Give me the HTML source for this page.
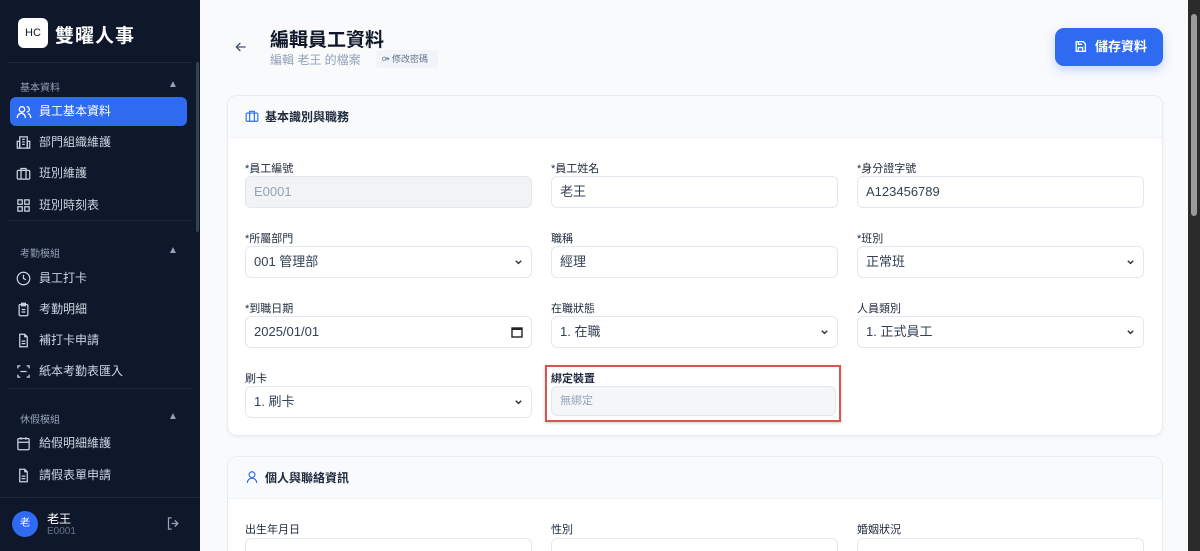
<!DOCTYPE html>
<html style="height:551px;overflow:hidden"><head><meta charset="utf-8"><style>
*{box-sizing:border-box;margin:0;padding:0}
body{width:1200px;height:551px;overflow:hidden;position:relative;background:#f8fafc;font-family:"Liberation Sans","Noto Sans CJK TC",sans-serif;color:#1e293b}
.a{position:absolute}
.sb{left:0;top:0;width:200px;height:551px;background:#0f172a}
.sec{left:20px;font-size:10px;color:#94a3b8}
.tri{left:168px;font-size:10px;color:#94a3b8}
.it{left:10px;width:177px;height:29px;border-radius:6px;color:#cbd5e1;font-size:12px;line-height:29px;padding-left:29px}
.it svg{position:absolute;left:6px;top:7px}
.hr{left:8px;width:184px;height:1px;background:#1e293b}
.lbl{font-size:11px;color:#1e293b}
.inp{height:32px;width:287px;border:1px solid #e2e8f0;border-radius:6px;background:#fff;font-size:13px;line-height:30px;padding-left:8px;color:#334155}
.chev{position:absolute;right:8px;top:11px}
</style></head><body>
<div class="a sb"></div>
<div class="a" style="left:196px;top:62px;width:3px;height:170px;background:#334155;border-radius:2px"></div>
<div class="a" style="left:18px;top:18px;width:30px;height:30px;background:#fff;border-radius:6px;font-size:11px;line-height:30px;text-align:center;color:#0f172a">HC</div>
<div class="a" style="left:55px;top:21px;font-size:19px;font-weight:bold;color:#fff;letter-spacing:1px">雙曜人事</div>
<div class="a hr" style="top:62px"></div>
<div class="a sec" style="top:79px">基本資料</div><div class="a tri" style="top:79px">▲</div>
<div class="a it" style="top:97px;background:#2f6bf0;color:#fff">員工基本資料<svg width="16" height="16" viewBox="0 0 24 24" fill="none" stroke="#fff" stroke-width="2"><circle cx="9" cy="8" r="4"/><path d="M2 21v-1a6 6 0 0 1 12 0v1M16 4a4 4 0 0 1 0 8M22 21v-1a6 6 0 0 0-4-5.6"/></svg></div>
<div class="a it" style="top:128px">部門組織維護<svg width="15" height="15" viewBox="0 0 24 24" fill="none" stroke="#cbd5e1" stroke-width="2"><rect x="6" y="3" width="12" height="18"/><path d="M2 10h4v11H2zM18 10h4v11h-4zM10 7h4M10 11h4M10 15h4"/></svg></div>
<div class="a it" style="top:159px">班別維護<svg width="15" height="15" viewBox="0 0 24 24" fill="none" stroke="#cbd5e1" stroke-width="2"><rect x="2" y="7" width="20" height="14" rx="2"/><path d="M8 7V4h8v3M8 7v14M16 7v14"/></svg></div>
<div class="a it" style="top:191px">班別時刻表<svg width="15" height="15" viewBox="0 0 24 24" fill="none" stroke="#cbd5e1" stroke-width="2"><rect x="3" y="3" width="7" height="7"/><rect x="14" y="3" width="7" height="7"/><rect x="3" y="14" width="7" height="7"/><rect x="14" y="14" width="7" height="7"/></svg></div>
<div class="a hr" style="top:220px"></div>
<div class="a sec" style="top:245px">考勤模組</div><div class="a tri" style="top:245px">▲</div>
<div class="a it" style="top:264px">員工打卡<svg width="15" height="15" viewBox="0 0 24 24" fill="none" stroke="#cbd5e1" stroke-width="2"><circle cx="12" cy="12" r="10"/><path d="M12 6v6l4 2"/></svg></div>
<div class="a it" style="top:295px">考勤明細<svg width="15" height="15" viewBox="0 0 24 24" fill="none" stroke="#cbd5e1" stroke-width="2"><rect x="5" y="4" width="14" height="18" rx="2"/><path d="M9 2h6v4H9zM9 12h6M9 16h6"/></svg></div>
<div class="a it" style="top:326px">補打卡申請<svg width="15" height="15" viewBox="0 0 24 24" fill="none" stroke="#cbd5e1" stroke-width="2"><path d="M14 2H6v20h12V6zM14 2v4h4M9 13h6M9 17h6"/></svg></div>
<div class="a it" style="top:357px">紙本考勤表匯入<svg width="15" height="15" viewBox="0 0 24 24" fill="none" stroke="#cbd5e1" stroke-width="2"><path d="M3 7V3h4M17 3h4v4M21 17v4h-4M7 21H3v-4M7 12h10"/></svg></div>
<div class="a hr" style="top:388px"></div>
<div class="a sec" style="top:411px">休假模組</div><div class="a tri" style="top:411px">▲</div>
<div class="a it" style="top:429px">給假明細維護<svg width="15" height="15" viewBox="0 0 24 24" fill="none" stroke="#cbd5e1" stroke-width="2"><rect x="3" y="4" width="18" height="18" rx="2"/><path d="M3 10h18M8 2v4M16 2v4"/></svg></div>
<div class="a it" style="top:461px">請假表單申請<svg width="15" height="15" viewBox="0 0 24 24" fill="none" stroke="#cbd5e1" stroke-width="2"><path d="M14 2H6v20h12V6zM14 2v4h4M9 13h6M9 17h6"/></svg></div>
<div class="a hr" style="top:497px;left:0;width:200px"></div>
<div class="a" style="left:12px;top:511px;width:26px;height:26px;border-radius:50%;background:#2f6bf0;color:#fff;font-size:10px;line-height:26px;text-align:center">老</div>
<div class="a" style="left:47px;top:510px;font-size:12px;color:#fff">老王</div>
<div class="a" style="left:47px;top:526px;font-size:10px;color:#64748b">E0001</div>
<svg class="a" style="left:166px;top:516px" width="15" height="15" viewBox="0 0 24 24" fill="none" stroke="#94a3b8" stroke-width="2"><path d="M9 3H4v18h5M14 7l5 5-5 5M19 12H9"/></svg>

<div class="a" style="left:1188px;top:0;width:12px;height:551px;background:#2b2b2b"></div>
<div class="a" style="left:1191px;top:14px;width:6px;height:202px;background:#9a9a9a;border-radius:3px"></div>

<svg class="a" style="left:233px;top:39px" width="16" height="16" viewBox="0 0 24 24" fill="none" stroke="#475569" stroke-width="2"><path d="M19 12H5M11 6l-6 6 6 6"/></svg>
<div class="a" style="left:270px;top:25px;font-size:19px;font-weight:bold;color:#0f172a">編輯員工資料</div>
<div class="a" style="left:270px;top:51px;font-size:12px;color:#94a3b8">編輯 老王 的檔案</div>
<div class="a" style="left:376px;top:50px;width:62px;height:18px;background:#f1f5f9;border-radius:3px;font-size:9px;color:#64748b;line-height:18px;padding-left:6px">⚩ 修改密碼</div>
<div class="a" style="left:1055px;top:28px;width:108px;height:38px;background:#2f6bf0;border-radius:9px;color:#fff;font-size:13px;font-weight:bold;line-height:38px;padding-left:40px;box-shadow:0 4px 10px rgba(47,107,240,.25)">儲存資料</div>
<svg class="a" style="left:1074px;top:40px" width="13" height="13" viewBox="0 0 24 24" fill="none" stroke="#fff" stroke-width="2.4"><path d="M4 3h13l4 4v14H4zM8 3v5h7M8 21v-7h8v7"/></svg>

<div class="a" style="left:227px;top:95px;width:936px;height:341px;background:#fff;border:1px solid #e8edf3;border-radius:10px;box-shadow:0 1px 3px rgba(0,0,0,.05);overflow:hidden">
<div style="height:42px;background:#f8fafc;border-bottom:1px solid #eef2f6"></div></div>
<svg class="a" style="left:245px;top:109px" width="14" height="14" viewBox="0 0 24 24" fill="none" stroke="#2f6bf0" stroke-width="2"><rect x="2" y="7" width="20" height="14" rx="2"/><path d="M8 7V4h8v3M8 7v14M16 7v14"/></svg>
<div class="a" style="left:265px;top:108px;font-size:12px;font-weight:bold">基本識別與職務</div>

<div class="a" style="left:227px;top:456px;width:936px;height:95px;background:#fff;border:1px solid #e8edf3;border-bottom:none;border-radius:10px 10px 0 0;overflow:hidden">
<div style="height:42px;background:#f8fafc;border-bottom:1px solid #eef2f6"></div></div>
<svg class="a" style="left:245px;top:470px" width="14" height="14" viewBox="0 0 24 24" fill="none" stroke="#2f6bf0" stroke-width="2"><circle cx="12" cy="8" r="5"/><path d="M4 22a8 8 0 0 1 16 0"/></svg>
<div class="a" style="left:265px;top:469px;font-size:12px;font-weight:bold">個人與聯絡資訊</div>

<div class="a lbl" style="left:245px;top:160px">*員工編號</div>
<div class="a inp" style="left:245px;top:176px;background:#f1f3f5;color:#94a3b8">E0001</div>
<div class="a lbl" style="left:551px;top:160px">*員工姓名</div>
<div class="a inp" style="left:551px;top:176px">老王</div>
<div class="a lbl" style="left:857px;top:160px">*身分證字號</div>
<div class="a inp" style="left:857px;top:176px">A123456789</div>

<div class="a lbl" style="left:245px;top:230px">*所屬部門</div>
<div class="a inp" style="left:245px;top:246px">001 管理部<svg class="chev" width="9" height="9" viewBox="0 0 10 10"><path d="M2 3l3 3 3-3" stroke="#333" stroke-width="1.6" fill="none"/></svg></div>
<div class="a lbl" style="left:551px;top:230px">職稱</div>
<div class="a inp" style="left:551px;top:246px">經理</div>
<div class="a lbl" style="left:857px;top:230px">*班別</div>
<div class="a inp" style="left:857px;top:246px">正常班<svg class="chev" width="9" height="9" viewBox="0 0 10 10"><path d="M2 3l3 3 3-3" stroke="#333" stroke-width="1.6" fill="none"/></svg></div>

<div class="a lbl" style="left:245px;top:300px">*到職日期</div>
<div class="a inp" style="left:245px;top:316px">2025/01/01<svg class="chev" style="top:9px" width="12" height="12" viewBox="0 0 12 12"><rect x="1" y="2" width="10" height="9" fill="none" stroke="#222" stroke-width="1.4"/><path d="M1 3h10" stroke="#222" stroke-width="2"/></svg></div>
<div class="a lbl" style="left:551px;top:300px">在職狀態</div>
<div class="a inp" style="left:551px;top:316px">1. 在職<svg class="chev" width="9" height="9" viewBox="0 0 10 10"><path d="M2 3l3 3 3-3" stroke="#333" stroke-width="1.6" fill="none"/></svg></div>
<div class="a lbl" style="left:857px;top:300px">人員類別</div>
<div class="a inp" style="left:857px;top:316px">1. 正式員工<svg class="chev" width="9" height="9" viewBox="0 0 10 10"><path d="M2 3l3 3 3-3" stroke="#333" stroke-width="1.6" fill="none"/></svg></div>

<div class="a lbl" style="left:245px;top:370px">刷卡</div>
<div class="a inp" style="left:245px;top:386px">1. 刷卡<svg class="chev" width="9" height="9" viewBox="0 0 10 10"><path d="M2 3l3 3 3-3" stroke="#333" stroke-width="1.6" fill="none"/></svg></div>
<div class="a" style="left:545px;top:365px;width:296px;height:57px;border:2px solid #d9534f;box-shadow:0 1px 3px rgba(0,0,0,.2)"></div>
<div class="a lbl" style="left:551px;top:370px;font-weight:bold">綁定裝置</div>
<div class="a inp" style="left:551px;top:386px;width:285px;height:30px;background:#f5f6f8;color:#94a3b8;font-size:11px;line-height:28px">無綁定</div>

<div class="a lbl" style="left:245px;top:521px">出生年月日</div>
<div class="a inp" style="left:245px;top:538px;height:13px;border-bottom:none;border-radius:6px 6px 0 0;color:#64748b"></div>
<div class="a lbl" style="left:551px;top:521px">性別</div>
<div class="a inp" style="left:551px;top:538px;height:13px;border-bottom:none;border-radius:6px 6px 0 0"></div>
<div class="a lbl" style="left:857px;top:521px">婚姻狀況</div>
<div class="a inp" style="left:857px;top:538px;height:13px;border-bottom:none;border-radius:6px 6px 0 0"></div>
</body></html>
